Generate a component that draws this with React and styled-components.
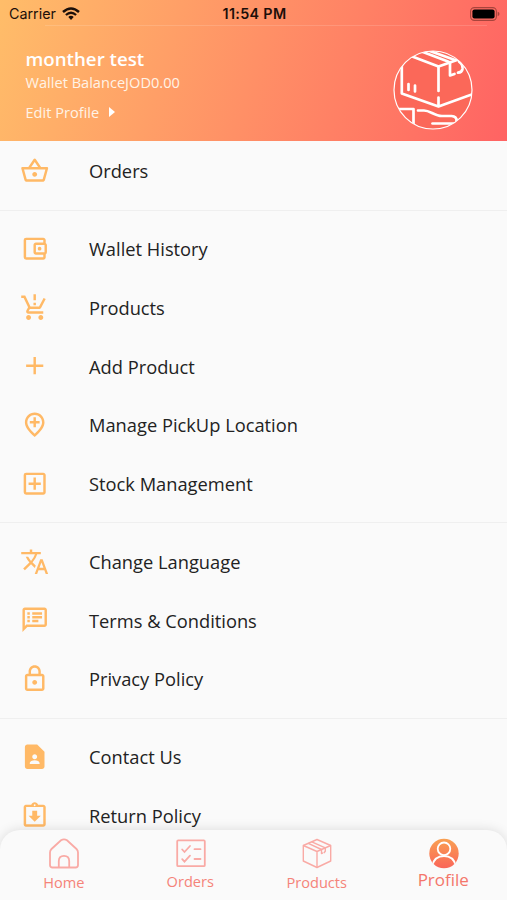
import React from "react";
import styled, { createGlobalStyle, css } from "styled-components";
import {
  MdAdd,
  MdContactPage,
  MdOutlineAccountBalanceWallet,
  MdOutlineAddBox,
  MdOutlineAddLocation,
  MdOutlineAssignmentReturned,
  MdOutlineLock,
  MdOutlineShoppingBasket,
  MdOutlineSpeakerNotes,
  MdProductionQuantityLimits,
  MdTranslate,
} from "react-icons/md";

const GlobalStyle = createGlobalStyle`
  * {
    box-sizing: border-box;
  }

  body {
    margin: 0;
    background: #fafafa;
    font-family: "Open Sans", "Noto Sans", sans-serif;
    overflow: hidden;
  }
`;

const Screen = styled.div`
  display: flex;
  flex-direction: column;
  position: relative;
  width: 507px;
  height: 900px;
  overflow: hidden;
  background: #fafafa;
`;

const Header = styled.header`
  flex: none;
  height: 141px;
  background: linear-gradient(107deg, #ffbd69 0%, #ff6363 100%);
`;

const StatusBar = styled.div`
  display: grid;
  grid-template-columns: 1fr auto 1fr;
  align-items: center;
  height: 25px;
  padding: 3px 7px 0 9px;
  color: #1c0f0a;
  font-family: Inter, "Liberation Sans", sans-serif;
  font-size: 14.3px;
  line-height: 22px;

  svg {
    display: block;
  }
`;

const HeaderLine = styled.div`
  height: 1px;
  margin: 0 20px 0 45px;
  background: rgba(255, 255, 255, 0.14);
`;

const Carrier = styled.div`
  display: flex;
  align-items: center;
  gap: 6px;
`;

const Clock = styled.div`
  font-weight: 600;
  letter-spacing: 0.35px;
`;

const Battery = styled.div`
  justify-self: end;
`;

const UserCard = styled.div`
  display: flex;
  justify-content: space-between;
  padding: 20px 34px 0 25.5px;
  color: #fff;
`;

const UserInfo = styled.div`
  white-space: nowrap;
`;

const UserName = styled.div`
  font-size: 18.7px;
  font-weight: 600;
  line-height: 25px;
`;

const Balance = styled.div`
  font-size: 14.6px;
  line-height: 22px;
  color: #fff3e6;
`;

const EditProfile = styled.div`
  display: flex;
  align-items: center;
  gap: 10px;
  margin-top: 8px;
  font-size: 14.6px;
  line-height: 22px;
  color: #fff3e6;
`;

const Avatar = styled.div`
  margin-top: 4px;

  svg {
    display: block;
  }
`;

const Menu = styled.main`
  flex: 1;
  min-height: 0;
  padding-top: 1px;
  overflow: hidden;
`;

const Divider = styled.div`
  display: flex;
  align-items: center;
  height: 19.6px;

  &::after {
    content: "";
    flex: 1;
    height: 1px;
    background: #efefef;
  }
`;

const MenuRow = styled.div`
  display: flex;
  align-items: center;
  gap: 39.3px;
  height: 58.6px;
  padding-left: 20.3px;
  font-size: 18.3px;
  line-height: 26px;
  color: #222;

  svg {
    flex: none;
    width: 29.4px;
    height: 29.4px;
    margin-bottom: 1px;
    color: #ffb966;
  }
`;

const TabBar = styled.nav`
  position: absolute;
  left: 0;
  right: 0;
  bottom: 0;
  display: grid;
  grid-template-columns: repeat(4, 1fr);
  height: 70px;
  padding-left: 1px;
  border-radius: 20px 20px 0 0;
  background: #fafafa;
  box-shadow: 0 0 12px rgba(0, 0, 0, 0.13);
`;

const Tab = styled.div`
  display: flex;
  flex-direction: column;
  align-items: center;
  padding-top: 8px;
  color: #f58379;
  font-size: 14.6px;
  line-height: 20px;

  svg {
    display: block;
    flex: none;
    color: #f9aaa5;
  }

  span {
    margin: ${({ $labelGap }) => $labelGap || 3}px 1px 0 0;
  }

  ${({ $active }) =>
    $active &&
    css`
      color: #f4766b;
      font-size: 17px;
    `}
`;

const WifiIcon = () => (
  <svg width="18" height="14" viewBox="0 0 18 14" fill="none">
    <path d="M1 5Q9-2 17 5" stroke="currentColor" strokeWidth="2.5" />
    <path d="M3.9 8Q9 3.6 14.1 8" stroke="currentColor" strokeWidth="2.3" />
    <path d="M9 8.8Q7.4 8.8 6.3 10L9 13l2.7-3Q10.6 8.8 9 8.8Z" fill="currentColor" />
  </svg>
);

const BatteryIcon = () => (
  <svg width="30" height="14" viewBox="0 0 30 14" fill="none">
    <rect x="0.6" y="0.6" width="25.8" height="12.8" rx="3.8" stroke="#a8443c" strokeWidth="1.1" />
    <rect x="2.4" y="2.4" width="22.2" height="9.2" rx="2.1" fill="#000" />
    <path d="M27.7 4.8Q29.5 5.4 29.5 7T27.7 9.2Z" fill="#a8443c" />
  </svg>
);

const CaretIcon = () => (
  <svg width="6" height="10" viewBox="0 0 6 10">
    <path d="M0 0l6 5-6 5z" fill="#fff" />
  </svg>
);

// parcel held over an open hand, cropped by the circle
const ParcelAvatar = () => (
  <svg width="80" height="80" viewBox="0 0 80 80" fill="none">
    <defs>
      <clipPath id="avatar">
        <circle cx="40" cy="40" r="39" />
      </clipPath>
    </defs>
    <circle cx="40" cy="40" r="39" fill="#fb6859" />
    <g
      clipPath="url(#avatar)"
      stroke="#fff"
      strokeWidth="2.7"
      strokeLinejoin="round"
      strokeLinecap="round"
    >
      <path d="M8.8 10V43.500L45.500 56.500L80 44" />
      <path d="M14 4.500L45.500 16.500L64 10" />
      <path d="M26 .5L55 11.500" />
      <path d="M34 0L62 10" />
      <path d="M45.500 17V41M45.500 47.500V56" />
      <path d="M57 12V25.500L61.500 24" />
      <path d="M66 11.500Q70 14 69.500 19Q69 22.500 65 22.700" />
      <path d="M15.500 34V40M22 35.500V41.500" />
      <path d="M3 59H20.500V76" />
      <path d="M25 60.500H31Q34 60.500 39 63Q45 66 49 66H58.500Q64 66.500 63.500 71" />
      <path d="M39.500 73.500H66" />
    </g>
    <circle cx="40" cy="40" r="39" stroke="#fff" strokeWidth="1.2" />
  </svg>
);

const HomeIcon = () => (
  <svg width="30" height="31" viewBox="0 0 30 31" fill="none" stroke="currentColor" strokeWidth="1.8">
    <path d="M1 14.500Q1 12.500 2.500 11L12 2.300Q15 .5 18 2.300L27.500 11Q29 12.500 29 14.500V27Q29 29.500 26.500 29.500H3.500Q1 29.500 1 27Z" />
    <path d="M9.800 29V23Q9.800 17.800 15 17.800T20.200 23V29" />
  </svg>
);

const ChecklistIcon = () => (
  <svg width="30" height="30" viewBox="0 0 30 30" fill="none" stroke="currentColor" strokeWidth="1.8">
    <rect x="1.200" y="2.400" width="27.600" height="25.800" rx="1" />
    <path
      d="M6.200 11.500l2.300 2.500 5.500-6M6.200 21.200l2.300 2.500 5.500-6M18.500 11.200h6M18.500 21h6"
      strokeLinecap="round"
    />
  </svg>
);

const BoxIcon = () => (
  <svg
    width="30"
    height="31"
    viewBox="0 0 30 31"
    fill="none"
    stroke="currentColor"
    strokeWidth="1.4"
    strokeLinejoin="round"
  >
    <path d="M15 1.500L28.700 7.500V23L15 29.500L1.300 23V7.500Z" />
    <path d="M1.300 7.500L15 13.500L28.700 7.500M15 13.500V29" />
    <path d="M6.300 5.300L19.500 11.500V15.500L21 14.800M9.800 3.800L23.300 9.800V13.200L21.800 15" />
  </svg>
);

const ProfileIcon = () => (
  <svg width="30" height="31" viewBox="0 0 30 31" fill="none">
    <defs>
      <linearGradient id="profile" x1="0" y1="0" x2="0" y2="1">
        <stop offset="0" stopColor="#f9a052" />
        <stop offset="1" stopColor="#fa6659" />
      </linearGradient>
      <clipPath id="profileClip">
        <circle cx="15" cy="15.500" r="14.700" />
      </clipPath>
    </defs>
    <circle cx="15" cy="15.500" r="14.700" fill="url(#profile)" />
    <g clipPath="url(#profileClip)" stroke="#fff" strokeWidth="1.800">
      <circle cx="15" cy="10.800" r="6.300" />
      <path d="M3 28Q5.500 18 15 18T27 28" />
    </g>
  </svg>
);

const groups = [
  [{ label: "Orders", Icon: MdOutlineShoppingBasket }],
  [
    { label: "Wallet History", Icon: MdOutlineAccountBalanceWallet },
    { label: "Products", Icon: MdProductionQuantityLimits },
    { label: "Add Product", Icon: MdAdd },
    { label: "Manage PickUp Location", Icon: MdOutlineAddLocation },
    { label: "Stock Management", Icon: MdOutlineAddBox },
  ],
  [
    { label: "Change Language", Icon: MdTranslate },
    { label: "Terms & Conditions", Icon: MdOutlineSpeakerNotes },
    { label: "Privacy Policy", Icon: MdOutlineLock },
  ],
  [
    { label: "Contact Us", Icon: MdContactPage },
    { label: "Return Policy", Icon: MdOutlineAssignmentReturned },
  ],
];

const tabs = [
  { label: "Home", Icon: HomeIcon },
  { label: "Orders", Icon: ChecklistIcon },
  { label: "Products", Icon: BoxIcon },
  { label: "Profile", Icon: ProfileIcon, active: true, labelGap: 1 },
];

const App = () => (
  <Screen>
    <GlobalStyle />
    <Header>
      <StatusBar>
        <Carrier>
          Carrier
          <WifiIcon />
        </Carrier>
        <Clock>11:54 PM</Clock>
        <Battery>
          <BatteryIcon />
        </Battery>
      </StatusBar>
      <HeaderLine />
      <UserCard>
        <UserInfo>
          <UserName>monther test</UserName>
          <Balance>Wallet BalanceJOD0.00</Balance>
          <EditProfile>
            Edit Profile
            <CaretIcon />
          </EditProfile>
        </UserInfo>
        <Avatar>
          <ParcelAvatar />
        </Avatar>
      </UserCard>
    </Header>
    <Menu>
      {groups.map((rows, i) => (
        <React.Fragment key={rows[0].label}>
          {i > 0 && <Divider />}
          {rows.map(({ label, Icon }) => (
            <MenuRow key={label}>
              <Icon />
              {label}
            </MenuRow>
          ))}
        </React.Fragment>
      ))}
    </Menu>
    <TabBar>
      {tabs.map(({ label, Icon, active, labelGap }) => (
        <Tab key={label} $active={active} $labelGap={labelGap}>
          <Icon />
          <span>{label}</span>
        </Tab>
      ))}
    </TabBar>
  </Screen>
);

export default App;
